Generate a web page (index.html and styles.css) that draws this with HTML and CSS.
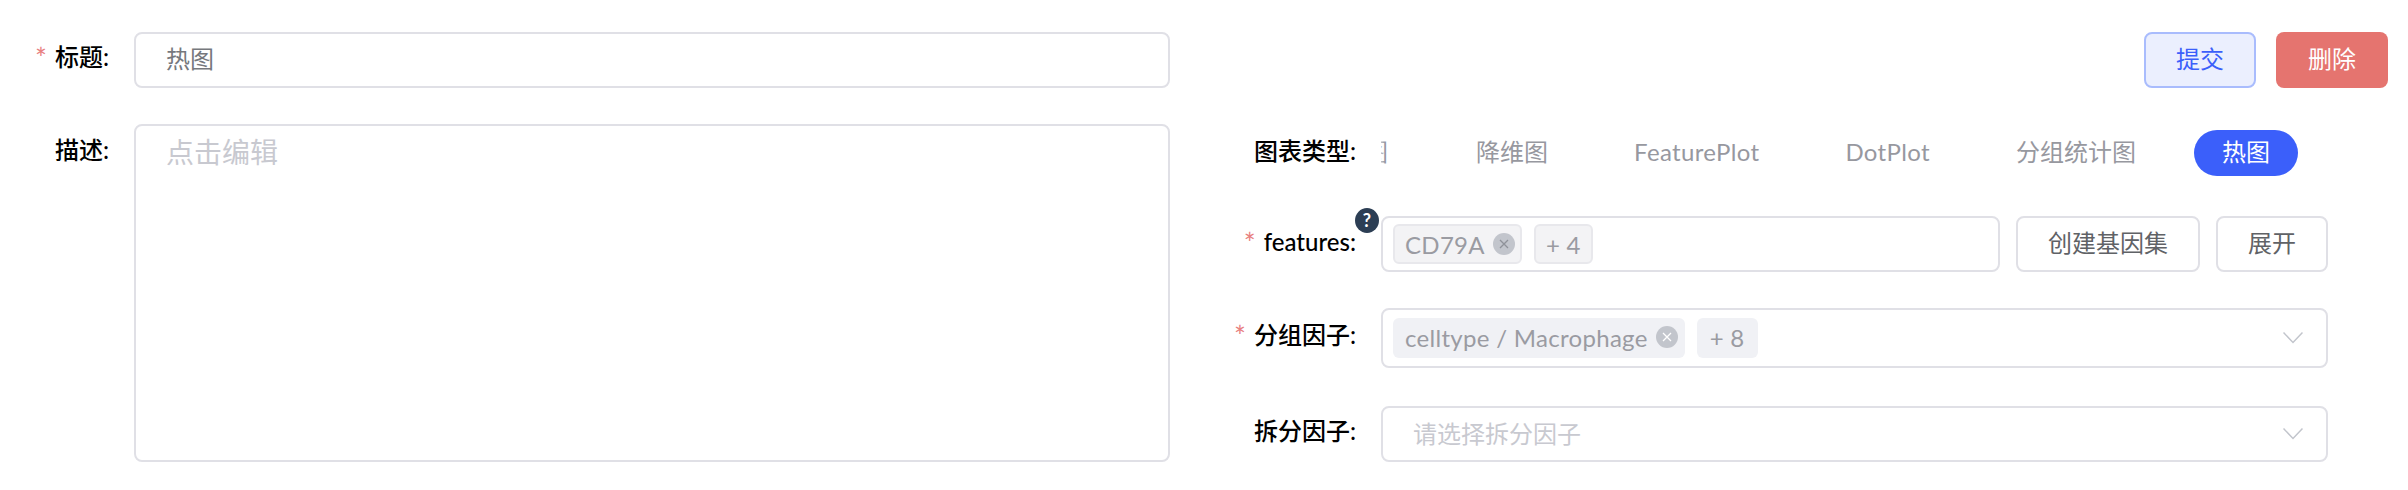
FILE: index.html
```html
<!DOCTYPE html>
<html lang="en">
<head>
    <meta charset="UTF-8">
    <title>热图</title>
    <link rel="stylesheet" href="styles.css">
</head>
<body>
    <div class="page">
        <div class="left-col">
            <div class="row title-row">
                <label class="label"><span class="star">*</span>标题:</label>
                <input class="text-input" type="text" value="热图">
            </div>
            <div class="row desc-row">
                <label class="label">描述:</label>
                <textarea class="text-area" placeholder="点击编辑"></textarea>
            </div>
        </div>

        <div class="right-col">
            <div class="actions">
                <button class="btn btn-submit">提交</button>
                <button class="btn btn-delete">删除</button>
            </div>

            <div class="form">
                <div class="row type-row">
                    <label class="label"><span class="lift">图表类型:</span></label>
                    <div class="tabs">
                        <span class="tab tab-clipped">图</span>
                        <span class="tab">降维图</span>
                        <span class="tab tab-latin">FeaturePlot</span>
                        <span class="tab tab-latin">DotPlot</span>
                        <span class="tab">分组统计图</span>
                        <span class="tab tab-active">热图</span>
                    </div>
                </div>

                <div class="row features-row">
                    <label class="label has-help">
                        <span class="lift"><span class="star">*</span>features:</span>
                        <span class="help">?</span>
                    </label>
                    <div class="select select-plain">
                        <span class="tag tag-outline">CD79A
                            <svg class="tag-close" viewBox="0 0 22 22"><circle cx="11" cy="11" r="11" fill="#c2c5cc"/><path d="M7 7l8 8M15 7l-8 8" stroke="#8f929a" stroke-width="1.3"/></svg>
                        </span>
                        <span class="tag tag-outline tag-more">+ 4</span>
                    </div>
                    <button class="btn btn-plain btn-geneset">创建基因集</button>
                    <button class="btn btn-plain btn-expand">展开</button>
                </div>

                <div class="row group-row">
                    <label class="label"><span class="lift"><span class="star">*</span>分组因子:</span></label>
                    <div class="select">
                        <span class="tag">celltype / Macrophage
                            <svg class="tag-close" viewBox="0 0 22 22"><circle cx="11" cy="11" r="11" fill="#c2c5cc"/><path d="M7 7l8 8M15 7l-8 8" stroke="#fff" stroke-width="1.3"/></svg>
                        </span>
                        <span class="tag tag-more">+ 8</span>
                        <svg class="chevron" viewBox="0 0 20 12"><path d="M0.5 0.5L10 10.5L19.5 0.5" fill="none" stroke="#c2c5cc" stroke-width="1.5"/></svg>
                    </div>
                </div>

                <div class="row split-row">
                    <label class="label"><span class="lift">拆分因子:</span></label>
                    <div class="select select-empty">
                        <span class="placeholder">请选择拆分因子</span>
                        <svg class="chevron" viewBox="0 0 20 12"><path d="M0.5 0.5L10 10.5L19.5 0.5" fill="none" stroke="#c2c5cc" stroke-width="1.5"/></svg>
                    </div>
                </div>
            </div>
        </div>
    </div>
</body>
</html>
```

FILE: styles.css
```css
* {
    box-sizing: border-box;
}
html, body {
    margin: 0;
    background: #fff;
    overflow: hidden;
}
body {
    font-family: Lato, "Noto Sans CJK SC", sans-serif;
    font-size: 24px;
    color: #000;
}
.page {
    display: flex;
    width: 2408px;
    height: 490px;
    padding-top: 32px;
}
.left-col {
    width: 1170px;
    flex: none;
}
.right-col {
    flex: 1;
    padding-left: 30px;
}
.row {
    display: flex;
}

/* labels */
.label {
    flex: none;
    width: 109px;
    margin-right: 25px;
    text-align: right;
    font-weight: 500;
    line-height: 36px;
    white-space: nowrap;
}
.form .label {
    position: relative;
    width: 156px;
}
.star {
    color: #e88080;
    margin-right: 8px;
    font-size: 28px;
    font-weight: 400;
    line-height: 0;
    vertical-align: -3px;
}
.lift {
    position: relative;
    top: -2px;
}
.help {
    position: absolute;
    top: -8px;
    right: -23px;
    width: 24px;
    height: 25px;
    border-radius: 50%;
    background: #2c3e54;
    color: #fff;
    font-size: 18px;
    font-weight: 700;
    line-height: 25px;
    text-align: center;
}

/* left column */
.title-row .label {
    padding-top: 7px;
}
.text-input, .text-area {
    display: block;
    width: 1036px;
    border: 2px solid #e0e0e6;
    border-radius: 8px;
    font-family: inherit;
    outline: none;
    background: #fff;
}
.text-input {
    height: 56px;
    padding: 0 30px 5px;
    font-size: 24px;
    color: #76787d;
}
.desc-row {
    margin-top: 36px;
}
.desc-row .label {
    padding-top: 8px;
}
.text-area {
    height: 338px;
    padding: 6px 30px;
    font-size: 28px;
    line-height: 40px;
    resize: none;
}
.text-area::placeholder {
    color: #c8c9d0;
}

/* buttons */
.actions {
    display: flex;
    justify-content: flex-end;
    gap: 20px;
    padding-right: 20px;
}
.btn {
    height: 56px;
    padding: 0 0 3px;
    border-radius: 8px;
    font-family: inherit;
    font-size: 24px;
    line-height: 1;
}
.btn-submit, .btn-delete {
    width: 112px;
}
.btn-submit {
    background: #ebeffe;
    border: 2px solid #a9bcfd;
    color: #3b5ffa;
}
.btn-delete {
    background: #e5746f;
    border: none;
    color: #fff;
}
.btn-plain {
    flex: none;
    margin-left: 16px;
    background: #fff;
    border: 2px solid #e0e0e6;
    color: #606266;
}
.btn-geneset {
    width: 184px;
}
.btn-expand {
    width: 112px;
}

/* form on the right */
.form {
    width: 1128px;
    margin-top: 42px;
}
.type-row {
    height: 46px;
}
.type-row .label {
    line-height: 46px;
}
.tabs {
    position: relative;
    display: flex;
    gap: 30px;
    flex: 1;
    overflow: hidden;
}
.tabs::before {
    content: "";
    position: absolute;
    left: 0;
    top: 0;
    bottom: 0;
    width: 4px;
    background: linear-gradient(to right, rgba(255, 255, 255, 0.4), rgba(255, 255, 255, 0));
}
.tab {
    flex: none;
    height: 46px;
    padding: 0 28px;
    border-radius: 23px;
    line-height: 44px;
    color: #97989f;
}
.tab-latin {
    letter-spacing: 0.35px;
}
.tab-clipped {
    margin-left: -45px;
    padding-right: 30px;
}
.tab-active {
    background: #3b5ffa;
    color: #fff;
}
.features-row {
    margin-top: 40px;
}
.features-row .label {
    line-height: 56px;
}
.group-row {
    margin-top: 36px;
}
.group-row .label {
    line-height: 58px;
}
.split-row {
    margin-top: 38px;
}
.split-row .label {
    line-height: 54px;
}

/* selects */
.select {
    display: flex;
    align-items: center;
    gap: 12px;
    flex: 1;
    min-width: 0;
    height: 60px;
    padding: 0 10px;
    border: 2px solid #e0e0e6;
    border-radius: 8px;
    color: #9a9ba2;
    position: relative;
}
.select-plain, .select-empty {
    height: 56px;
}
.select-empty {
    padding: 0 30px 4px;
}
.placeholder {
    color: #c8c9d0;
}
.tag {
    display: flex;
    align-items: center;
    gap: 8px;
    height: 40px;
    padding: 0 7px 2px 12px;
    border-radius: 6px;
    background: #f0f1f5;
    white-space: nowrap;
    letter-spacing: 0.3px;
}
.tag-more {
    padding: 0 13px 2px;
}
.tag-outline {
    background: #f3f3f5;
    border: 2px solid #e8e8ec;
    padding: 0 5px 0 10px;
}
.tag-outline.tag-more {
    padding: 0 10px;
}
.tag-close {
    flex: none;
    width: 22px;
    height: 22px;
}
.chevron {
    position: absolute;
    right: 23px;
    top: 50%;
    width: 20px;
    height: 12px;
    margin-top: -6px;
}
```
